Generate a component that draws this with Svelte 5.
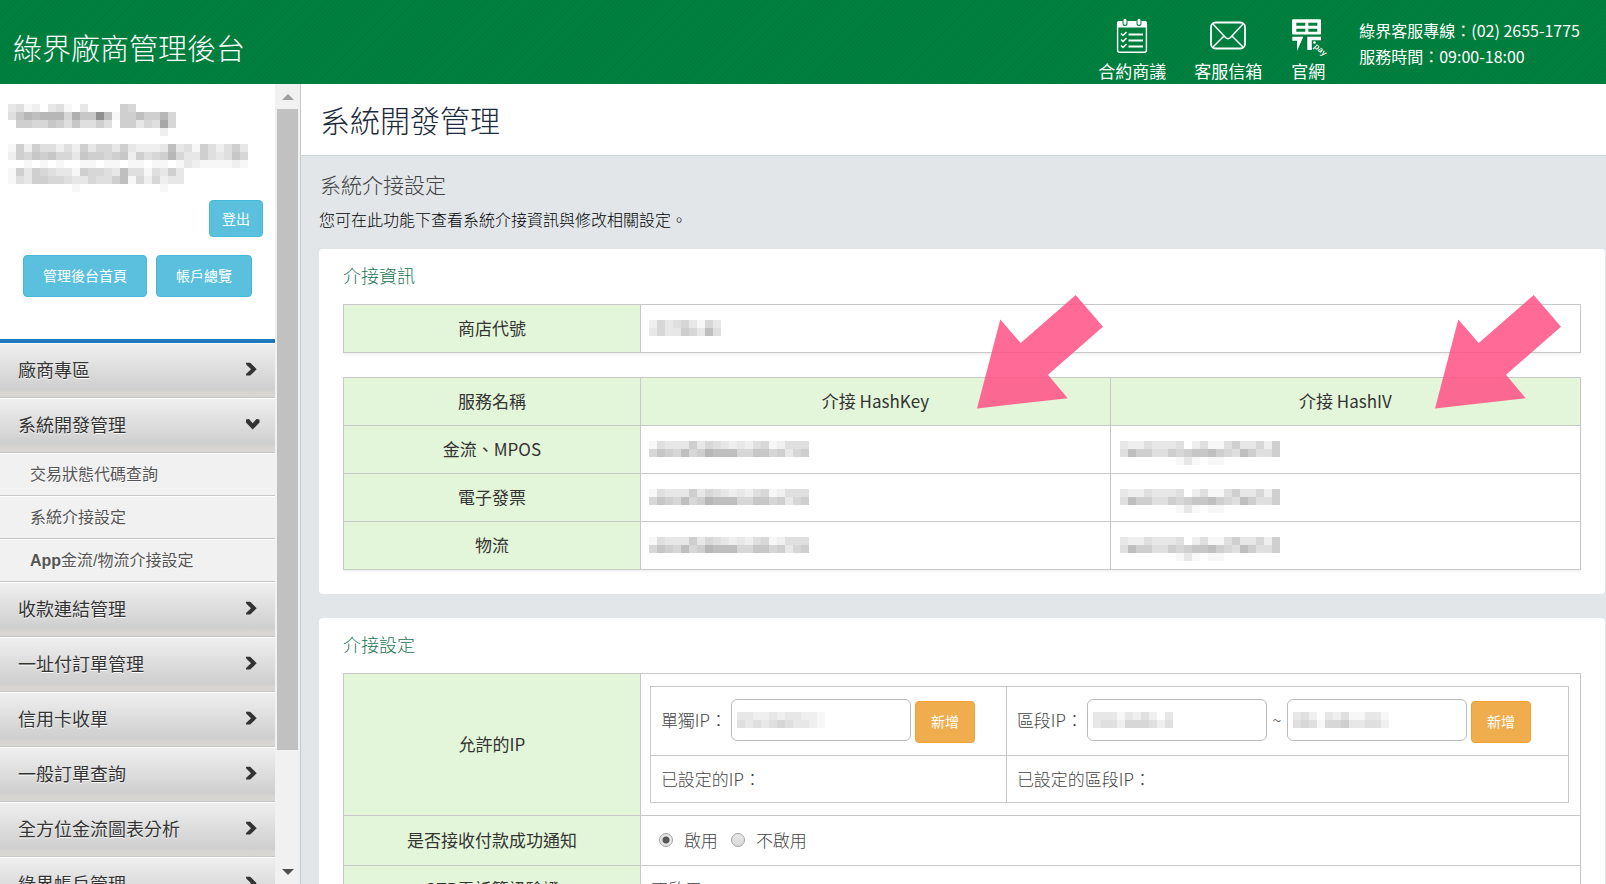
<script>
  const shopName = [
    '341203410300006500000',
    '47989995a77e816686695',
    '0665576474464066354b5',
    '000000000000000000020'
  ];
  const shopInfo = [
    '162644242635536322238341642463',
    '265767553766567264569533643475',
    '001010100110110110110132111121',
    '163654331655438441436300000000',
    '143665543354468152523300000000',
    '000000001000000000010000000000'
  ];
  const merchantId = ['253453153', '353365384'];
  const hashKey = ['14333635432324512444', '57658569888557756356'];
  const hashIv = ['32243334024114633526', '48664465677865486446', '00000001310110000000'];
  const ipSingle = ['33223233221', '43434543321'];
  const ipFrom = ['3331324203', '3442555424'];
  const ipTo = ['342032411331', '454155633442'];

  const services = ['金流、MPOS', '電子發票', '物流'];

  const menu = [
    { label: '廠商專區' },
    {
      label: '系統開發管理',
      open: true,
      children: [
        { label: '交易狀態代碼查詢' },
        { label: '系統介接設定' },
        { prefix: 'App', label: '金流/物流介接設定' }
      ]
    },
    { label: '收款連結管理' },
    { label: '一址付訂單管理' },
    { label: '信用卡收單' },
    { label: '一般訂單查詢' },
    { label: '全方位金流圖表分析' },
    { label: '綠界帳戶管理' }
  ];

  let notify = $state('on');

  // Each base-36 digit darkens its cell by eight grey levels.
  function grey(ch) {
    const v = 255 - parseInt(ch, 36) * 8;
    return `rgb(${v},${v},${v})`;
  }
</script>

{#snippet mosaic(rows)}
  <svg class="mosaic" width={rows[0].length * 8} height={rows.length * 8} shape-rendering="crispEdges" aria-hidden="true">
    {#each rows as row, y}
      {#each row.split('') as ch, x}
        {#if ch !== '0'}
          <rect x={x * 8} y={y * 8} width="8" height="8" fill={grey(ch)} />
        {/if}
      {/each}
    {/each}
  </svg>
{/snippet}

{#snippet arrow()}
  <svg class="arrow" width="126" height="114" viewBox="0 0 126 114" aria-hidden="true">
    <polygon points="0,113.5 23.3,24.5 43.7,48 98.7,0 126,31.7 71,79.7 90.7,103.2" fill="#ff5286" fill-opacity="0.86" />
  </svg>
{/snippet}

<div class="page">
  <header>
    <div class="brand">綠界廠商管理後台</div>
    <nav class="quick">
      <a href="#contract">
        <svg width="36" height="36" viewBox="0 0 36 36" fill="none" stroke="#fff">
          <rect x="3.6" y="4" width="28.8" height="30.2" rx="2" stroke-width="1.4" />
          <path d="M3 9.5V5q0-2 2-2h26q2 0 2 2v4.500z" fill="#fff" stroke="none" />
          <path d="M11 2v3.500M25 2v3.500" stroke="#00803f" stroke-width="5" stroke-linecap="round" />
          <path d="M11 2.300v3M25 2.300v3" stroke-width="3" stroke-linecap="round" />
          <path d="M14.500 16.500H29M14.500 22.500H29M14.500 28.500H29" stroke-width="1.800" />
          <path d="M7 15.500l2 2 3.500-3.500M7 21.500l2 2 3.500-3.500M7 27.500l2 2 3.500-3.500" stroke-width="1.500" />
        </svg>
        <span>合約商議</span>
      </a>
      <a href="#mail">
        <svg width="36" height="36" viewBox="0 0 36 36" fill="none" stroke="#fff" stroke-width="1.800">
          <rect x="1" y="4.500" width="34" height="26" rx="4.500" />
          <path d="M3 6l12.500 13.500q2.500 2.500 5 0L33 6M3 29l10.500-10.500M33 29L22.500 18.500" stroke-width="1.500" />
        </svg>
        <span>客服信箱</span>
      </a>
      <a href="#site">
        <svg class="logo" width="36" height="36" viewBox="0 0 36 36" fill="#fff">
          <path fill-rule="evenodd" d="M3 1.300H30q1 0 1 1V15.500q0 1-1 1H3q-1 0-1-1V2.300q0-1 1-1zM6.300 4.700v3h9v-3zM18.300 4.700v3h9v-3zM6.300 10.700v3h9v-3zM18.300 10.700v3h9v-3z" />
          <path d="M2.300 18.700H13.300L7 33V22.700H2.300zM17.300 18.700H31V22.200H21.800V32H17.300z" />
          <circle cx="24.500" cy="24.500" r="1.300" />
          <text x="23.500" y="29" transform="rotate(42 23.500 29)" font-size="8">pay</text>
        </svg>
        <span>官網</span>
      </a>
    </nav>
    <div class="contact">
      <div>綠界客服專線：(02) 2655-1775</div>
      <div>服務時間：09:00-18:00</div>
    </div>
  </header>

  <div class="body">
    <aside>
      <div class="side">
        <div class="profile">
          {@render mosaic(shopName)}
          {@render mosaic(shopInfo)}
          <button class="info logout" type="button">登出</button>
          <div class="actions">
            <button class="info" type="button">管理後台首頁</button>
            <button class="info" type="button">帳戶總覽</button>
          </div>
        </div>
        <nav>
          {#each menu as item}
            <a class="item" href="#menu">
              <span>{item.label}</span>
              <svg width="16" height="16" viewBox="0 0 16 16">
                {#if item.open}
                  <path d="M1 3.500L4 3 7.700 7.200 11.500 3l3 .5v3L7.700 13.500 1 6.500z" fill="#333" />
                {:else}
                  <path d="M1 1.800h4.200L11.700 8.200 5.200 14.500H1V13L6 8.200 1 3.300z" fill="#333" />
                {/if}
              </svg>
            </a>
            {#each item.children ?? [] as child}
              <a class="sub" href="#sub">{#if child.prefix}<b>{child.prefix}</b>{/if}{child.label}</a>
            {/each}
          {/each}
        </nav>
      </div>
      <div class="scroll">
        <svg width="12" height="6" viewBox="0 0 12 6"><path d="M6 0l6 6H0z" fill="#a0a0a0" /></svg>
        <div class="track"><div class="thumb"></div></div>
        <svg width="12" height="6" viewBox="0 0 12 6"><path d="M0 0h12L6 6z" fill="#505050" /></svg>
      </div>
    </aside>

    <main>
      <h1>系統開發管理</h1>
      <div class="content">
        <h2>系統介接設定</h2>
        <p>您可在此功能下查看系統介接資訊與修改相關設定。</p>

        <section>
          <h3>介接資訊</h3>
          <table>
            <tbody>
              <tr><th class="name">商店代號</th><td>{@render mosaic(merchantId)}</td></tr>
            </tbody>
          </table>
          <table class="keys">
            <thead>
              <tr>
                <th class="name">服務名稱</th>
                <th class="key">介接 HashKey{@render arrow()}</th>
                <th class="iv">介接 HashIV{@render arrow()}</th>
              </tr>
            </thead>
            <tbody>
              {#each services as service}
                <tr>
                  <th>{service}</th>
                  <td>{@render mosaic(hashKey)}</td>
                  <td class="down">{@render mosaic(hashIv)}</td>
                </tr>
              {/each}
            </tbody>
          </table>
        </section>

        <section>
          <h3>介接設定</h3>
          <table>
            <tbody>
              <tr>
                <th class="name">允許的IP</th>
                <td class="holder">
                  <table class="ips">
                    <tbody>
                      <tr>
                        <td class="single">
                          <div class="line">
                            <label for="ip-single">單獨IP：</label>
                            <span class="field"><input id="ip-single" type="text" />{@render mosaic(ipSingle)}</span>
                            <button class="add" type="button">新增</button>
                          </div>
                        </td>
                        <td>
                          <div class="line">
                            <label for="ip-from">區段IP：</label>
                            <span class="field"><input id="ip-from" type="text" />{@render mosaic(ipFrom)}</span>
                            <label class="tilde" for="ip-to">~</label>
                            <span class="field"><input id="ip-to" type="text" />{@render mosaic(ipTo)}</span>
                            <button class="add" type="button">新增</button>
                          </div>
                        </td>
                      </tr>
                      <tr class="set">
                        <td>已設定的IP：</td>
                        <td>已設定的區段IP：</td>
                      </tr>
                    </tbody>
                  </table>
                </td>
              </tr>
              <tr class="tall">
                <th>是否接收付款成功通知</th>
                <td>
                  <div class="radios">
                    <label><input type="radio" name="notify" value="on" bind:group={notify} />啟用</label>
                    <label><input type="radio" name="notify" value="off" bind:group={notify} />不啟用</label>
                  </div>
                </td>
              </tr>
              <tr>
                <th>OTP電話簡訊驗證</th>
                <td>不啟用</td>
              </tr>
            </tbody>
          </table>
        </section>
      </div>
    </main>
  </div>
</div>

<style>
  :global(body) {
    overflow: hidden;
  }
  .page {
    display: flex;
    flex-direction: column;
    height: 100vh;
    font-family: 'Noto Sans CJK TC', sans-serif;
    font-size: 17px;
    color: #444;
  }
  .page :global(*) {
    box-sizing: border-box;
  }
  a {
    color: inherit;
    text-decoration: none;
  }
  button,
  input {
    font-family: inherit;
  }
  svg {
    display: block;
    flex: none;
  }

  header {
    display: flex;
    flex: none;
    height: 84px;
    padding: 0 26px 0 13px;
    color: #fff;
    background: repeating-linear-gradient(135deg, #007b3b 0 1px, #00803e 1px 3px);
  }
  .brand {
    margin-right: auto;
    font-size: 29px;
    line-height: 40px;
    padding-top: 27px;
    font-weight: 300;
  }
  .quick {
    display: flex;
    gap: 28px;
    padding-top: 18px;
  }
  .quick a {
    display: flex;
    flex-direction: column;
    align-items: center;
    gap: 5px;
    line-height: 24px;
  }
  .logo {
    overflow: visible;
  }
  .quick text {
    font-family: 'Open Sans', sans-serif;
    font-weight: 600;
  }
  .contact {
    margin-left: 33px;
    padding-top: 17px;
    font-size: 16px;
    line-height: 26px;
  }

  .body {
    display: flex;
    flex: 1;
    min-height: 0;
  }
  aside {
    display: flex;
    flex: none;
    border-right: 1px solid #c8c8c8;
  }
  .side {
    width: 275px;
    overflow: hidden;
  }
  .profile {
    display: flex;
    flex-direction: column;
    gap: 8px;
    padding: 20px 12px 42px 8px;
    border-bottom: 4px solid #1f78be;
  }
  .info,
  .add {
    border: 1px solid #46b8da;
    border-radius: 4px;
    padding: 0 19px 2px;
    height: 42px;
    background: #5bc0de;
    color: #fff;
    font-size: 14px;
  }
  .logout {
    align-self: flex-end;
    height: 37px;
    padding: 0 12px 2px;
  }
  .actions {
    display: flex;
    gap: 9px;
    margin: 10px 0 0 15px;
  }
  .item {
    display: flex;
    align-items: center;
    justify-content: space-between;
    height: 55px;
    padding: 0 14px 3px 18px;
    border-top: 1px solid #fff;
    border-bottom: 1px solid #c6c6c6;
    background: linear-gradient(#efefef, #cfcfcf 85%, #d8d6d3 92%);
    font-size: 18px;
    color: #333;
    text-shadow: 0 1px 0 #fff;
  }
  .sub {
    display: block;
    height: 43px;
    padding-left: 30px;
    border-top: 1px solid #fff;
    border-bottom: 1px solid #c6c6c6;
    background: #f1f1f1;
    font-family: 'Liberation Sans', 'Noto Sans CJK TC', sans-serif;
    font-size: 16px;
    line-height: 42px;
    color: #555;
    text-shadow: 0 1px 0 #fff;
  }
  .scroll {
    display: flex;
    flex-direction: column;
    align-items: center;
    width: 25px;
    padding: 10px 0 9px;
    background: #f1f1f1;
  }
  .track {
    flex: 1;
    width: 21px;
    margin: 9px 0 6px;
  }
  .thumb {
    height: 85%;
    background: #c1c1c1;
  }

  main {
    flex: 1;
    min-width: 0;
    overflow: hidden;
    background: #e2e6e9;
  }
  h1,
  h2,
  h3,
  p {
    margin: 0;
    font-weight: 300;
  }
  h1 {
    height: 72px;
    padding-left: 19px;
    border-bottom: 1px solid #cfd6da;
    background: #fff;
    font-size: 30px;
    line-height: 70px;
    color: #1c2b3c;
  }
  .content {
    padding: 12px 1px 0 18px;
  }
  h2 {
    padding-left: 1px;
    font-size: 21px;
    line-height: 32px;
  }
  p {
    margin: 6px 0 17px;
    font-size: 16px;
    line-height: 26px;
    color: #000;
  }
  section {
    margin-bottom: 24px;
    padding: 11px 24px 24px;
    border-radius: 4px;
    background: #fff;
  }
  h3 {
    margin-bottom: 14px;
    font-size: 18px;
    line-height: 30px;
    color: #1a7550;
  }
  table {
    width: 100%;
    table-layout: fixed;
    border-collapse: collapse;
    box-shadow: 0 2px 2px rgba(0, 0, 0, 0.05);
  }
  .keys {
    margin-top: 24px;
  }
  th,
  td {
    height: 48px;
    padding: 0 8px 2px;
    border: 1px solid #c8c8c8;
  }
  th {
    background: #e3f6d9;
    color: #333;
    font-weight: 400;
  }
  td {
    font-weight: 300;
    padding-left: 10px;
  }
  td > :global(.mosaic) {
    margin-left: -2px;
  }
  .down > :global(.mosaic) {
    margin: 8px 0 0 -1px;
  }
  .name {
    width: 24%;
  }
  .key,
  .iv {
    position: relative;
  }
  .arrow {
    position: absolute;
    top: -83px;
    right: 7px;
  }
  .iv .arrow {
    right: 19px;
  }

  .holder {
    padding: 12px 11px 12px 9px;
  }
  .ips {
    box-shadow: none;
  }
  .ips td {
    height: 69px;
    padding: 0 10px;
  }
  .ips .single {
    width: 356px;
  }
  .ips .set td {
    height: 47px;
    padding-bottom: 2px;
  }
  .line {
    display: flex;
    gap: 4px;
    height: 44px;
    line-height: 42px;
    white-space: nowrap;
  }
  .field {
    position: relative;
    width: 180px;
  }
  .field input {
    display: block;
    width: 100%;
    height: 42px;
    padding: 0 8px;
    border: 1px solid #bbb;
    border-radius: 6px;
    background: #fff;
    font-size: 16px;
  }
  .field :global(.mosaic) {
    position: absolute;
    left: 6px;
    top: 13px;
    pointer-events: none;
  }
  .tilde {
    width: 12px;
    text-align: center;
  }
  .add {
    align-self: flex-end;
    padding: 0 15px 2px;
    border-color: #eea236;
    background: #f0ad4e;
  }
  .tall th,
  .tall td {
    height: 50px;
  }
  .radios {
    display: flex;
    gap: 13px;
    padding-left: 8px;
  }
  .radios label {
    display: flex;
    align-items: center;
    gap: 11px;
  }
  .radios input {
    appearance: none;
    width: 14px;
    height: 14px;
    margin: 0;
    border: 1px solid #a5a5a5;
    border-radius: 50%;
    background: linear-gradient(#e8e8e8, #dadada);
  }
  .radios input:checked {
    background: radial-gradient(circle, #555 0 3px, #e4e4e4 4px);
  }
</style>
